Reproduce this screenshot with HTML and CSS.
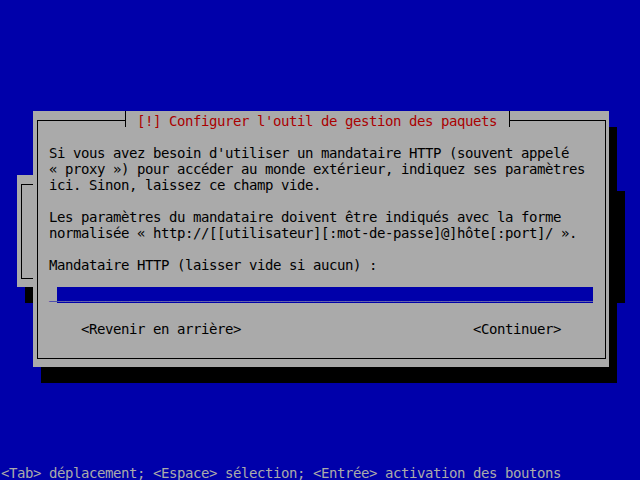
FILE: index.html
```html
<!DOCTYPE html>
<html>
<head>
  <title>Configurer l'outil de gestion des paquets</title>
  <link rel="stylesheet" href="styles.css">
</head>
<body>
  <div class="window back-window">
    <div class="frame"></div>
  </div>

  <div class="window main-window">
    <div class="frame">
      <div class="title">[!] Configurer l'outil de gestion des paquets</div>

      <div class="message">
        <p>Si vous avez besoin d'utiliser un mandataire HTTP (souvent appelé</p>
        <p>« proxy ») pour accéder au monde extérieur, indiquez ses paramètres</p>
        <p>ici. Sinon, laissez ce champ vide.</p>
        <p> </p>
        <p>Les paramètres du mandataire doivent être indiqués avec la forme</p>
        <p>normalisée « http://[[utilisateur][:mot-de-passe]@]hôte[:port]/ ».</p>
        <p> </p>
        <p>Mandataire HTTP (laisser vide si aucun) :</p>
        <p> </p>
        <p class="entry"><span class="cursor">_</span><span class="field">___________________________________________________________________</span></p>
      </div>

      <div class="buttons">
        <span>&lt;Revenir en arrière&gt;</span>
        <span>&lt;Continuer&gt;</span>
      </div>
    </div>
  </div>

  <div class="help">&lt;Tab&gt; déplacement; &lt;Espace&gt; sélection; &lt;Entrée&gt; activation des boutons</div>
</body>
</html>
```

FILE: styles.css
```css
html, body {
  height: 100%;
}
body {
  margin: 0;
  background-color: #0000aa;
  color: #000;
  font-family: "DejaVu Sans Mono", monospace;
  font-size: 14px;
  letter-spacing: -0.43px;
  line-height: 20px;
  display: flex;
  flex-direction: column;
  justify-content: flex-end;
  overflow: hidden;
}
p {
  margin: 0;
  height: 16px;
  white-space: pre;
}

/* newt windows, placed on the console like windows on a desktop */
.window {
  position: absolute;
  background-color: #aaaaaa;
  box-shadow: 8px 16px 0 #000;
  box-sizing: border-box;
  padding: 9px 3px 8px 4px;
}
.back-window {
  left: 17px;
  top: 175px;
  width: 600px;
  height: 112px;
}
.main-window {
  left: 33px;
  top: 111px;
  width: 576px;
  height: 256px;
}
.frame {
  height: 100%;
  box-sizing: border-box;
  border: 1px solid #000;
}

.title {
  width: max-content;
  height: 16px;
  margin: -10px 0 0 87px;
  padding: 0 12px 0 11px;
  background-color: #aaaaaa;
  border-left: 1px solid #000;
  border-right: 1px solid #000;
  color: #aa0000;
  white-space: pre;
}

.message {
  margin-top: 16px;
  padding-left: 11px;
}
.entry {
  line-height: 12px;
}
.entry .cursor {
  color: #0000aa;
}
.entry .field {
  display: inline-block;
  height: 16px;
  vertical-align: top;
  background-color: #0000aa;
  color: #aaaaaa;
}

.buttons {
  display: flex;
  justify-content: space-between;
  height: 16px;
  margin-top: 16px;
  padding: 0 44px 0 43px;
  white-space: pre;
}

.help {
  height: 16px;
  color: #aaaaaa;
  padding: 0 0 1px 1px;
  white-space: pre;
}
```
